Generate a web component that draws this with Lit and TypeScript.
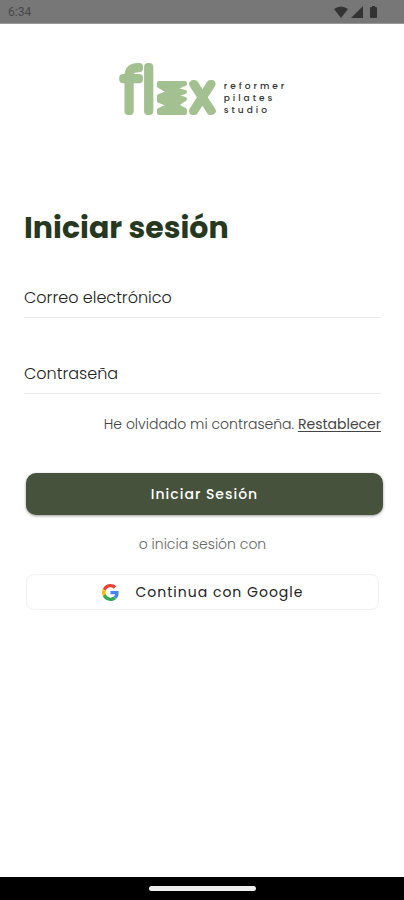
import { LitElement, html, css, svg } from "lit";
import { customElement } from "lit/decorators.js";

const family = css`Poppins, "Open Sans", sans-serif`;

@customElement("status-bar")
class StatusBar extends LitElement {
  static styles = css`
    :host { display: flex; align-items: center; justify-content: space-between; height: 24px; padding: 0 26px 0 8px; background: #777; color: #474747; font: 12px/24px Roboto, sans-serif; box-sizing: border-box; border-bottom: 1px solid #999; }
    svg { display: block; width: 44px; height: 14px; fill: #333; }
  `;
  render() {
    return html`<span>6:34</span>
      <svg viewBox="0 0 44 14" aria-hidden="true">
        <path d="M0 4Q7 -1 14 4L7 13Z" />
        <path d="M29 1V13H17Z" />
        <path d="M37 2h1V1h3v1h1q1 0 1 1v9q0 1-1 1h-5q-1 0-1-1V3q0-1 1-1Z" />
      </svg>`;
  }
}

@customElement("flex-logo")
class FlexLogo extends LitElement {
  static styles = css`
    :host { display: flex; justify-content: center; align-items: flex-end; gap: 7px; }
    svg { display: block; width: 99px; height: 54px; overflow: visible; }
    .word { font: 200 60px ${family}; fill: #a3c190; stroke: #a3c190; stroke-width: 8px; stroke-linejoin: round; }
    .low { font-size: 50px; }
    .mark { fill: #a3c190; stroke: #a3c190; stroke-width: 4px; stroke-linejoin: round; }
    .tag { padding-bottom: 2px; font: 500 9px/12px ${family}; letter-spacing: 3px; color: #333; }
    .tag span { display: block; }
  `;
  render() {
    return html`<svg viewBox="0 0 99 54" role="img" aria-label="flex">
        ${svg`<text class="word" y="47" x="4 25">fl</text>
        <text class="word low" y="47" x="74">x</text>
        <path class="mark" d="M41 19H67V20L55 25L67 28L57 32L67 35L58 41L67 46V49H41V46L51 41L41 37V32L51 28L41 22Z" />`}
      </svg>
      <div class="tag"><span>reformer</span><span>pilates</span><span>studio</span></div>`;
  }
}

@customElement("app-root")
export class AppRoot extends LitElement {
  static styles = css`
    :host { display: flex; flex-direction: column; min-height: 100vh; background: #fff; font-family: ${family}; color: #333; }
    main { flex: 1; display: flex; flex-direction: column; padding: 40px 23px 24px 24px; }
    h1 { margin: 88px 0 0; font-size: 30px; line-height: 44px; font-weight: 700; color: #263820; }
    form { display: flex; flex-direction: column; margin-top: 28px; }
    input { width: 100%; height: 40px; margin: 0 0 36px; padding: 0; border: 0; border-bottom: 1px solid #ececec; border-radius: 0; background: none; font: 300 16px/24px ${family}; color: #222; outline-offset: 4px; box-sizing: border-box; }
    input::placeholder { color: #222; opacity: 1; }
    .forgot { margin: -16px 0 0; text-align: right; font-size: 14px; font-weight: 300; line-height: 20px; color: #444; }
    a { font-weight: 400; color: #444; text-underline-offset: 2px; }
    button { display: flex; align-items: center; justify-content: center; border-radius: 8px; font: 500 14px/20px ${family}; letter-spacing: 1px; cursor: pointer; box-sizing: border-box; }
    .primary { height: 42px; margin: 39px -2px 0 2px; border: 0; border-radius: 10px; background: #46523c; color: #fff; box-shadow: 0 1px 3px #0006; }
    .or { margin: 19px 0 20px; text-align: center; font-size: 14px; font-weight: 300; line-height: 20px; color: #666; }
    .google { height: 36px; margin: 0 2px; gap: 17px; border: 1px solid #f0f0f0; background: #fff; color: #222; font-weight: 400; }
    .google svg { width: 17px; height: 17px; }
    footer { display: flex; align-items: center; justify-content: center; height: 23px; background: #000; }
    .pill { width: 107px; height: 5px; border-radius: 3px; background: #eee; }
  `;
  render() {
    return html`<status-bar></status-bar>
      <main>
        <flex-logo></flex-logo>
        <h1>Iniciar sesión</h1>
        <form @submit=${(e: Event) => e.preventDefault()}>
          <input type="email" aria-label="Correo electrónico" placeholder="Correo electrónico" />
          <input type="password" aria-label="Contraseña" placeholder="Contraseña" />
          <p class="forgot">He olvidado mi contraseña. <a href="#restablecer">Restablecer</a></p>
          <button class="primary" type="submit">Iniciar Sesión</button>
          <p class="or">o inicia sesión con</p>
          <button class="google" type="button">
            <svg viewBox="0 0 48 48" aria-hidden="true">
              <path fill="#ea4335" d="M24 9.5c3.54 0 6.71 1.22 9.21 3.6l6.85-6.85C35.9 2.38 30.47 0 24 0 14.62 0 6.51 5.38 2.56 13.22l7.98 6.19C12.43 13.72 17.74 9.5 24 9.5z" />
              <path fill="#4285f4" d="M46.98 24.55c0-1.57-.15-3.09-.38-4.55H24v9.02h12.94c-.58 2.96-2.26 5.48-4.78 7.18l7.73 6c4.51-4.18 7.09-10.36 7.09-17.65z" />
              <path fill="#fbbc05" d="M10.53 28.59c-.48-1.45-.76-2.99-.76-4.59s.27-3.14.76-4.59l-7.98-6.19C.92 16.46 0 20.12 0 24c0 3.88.92 7.54 2.56 10.78l7.97-6.19z" />
              <path fill="#34a853" d="M24 48c6.48 0 11.93-2.13 15.89-5.81l-7.73-6c-2.15 1.45-4.92 2.3-8.16 2.3-6.26 0-11.57-4.22-13.47-9.91l-7.98 6.19C6.51 42.62 14.62 48 24 48z" />
            </svg>
            <span>Continua con Google</span>
          </button>
        </form>
      </main>
      <footer><div class="pill"></div></footer>`;
  }
}
